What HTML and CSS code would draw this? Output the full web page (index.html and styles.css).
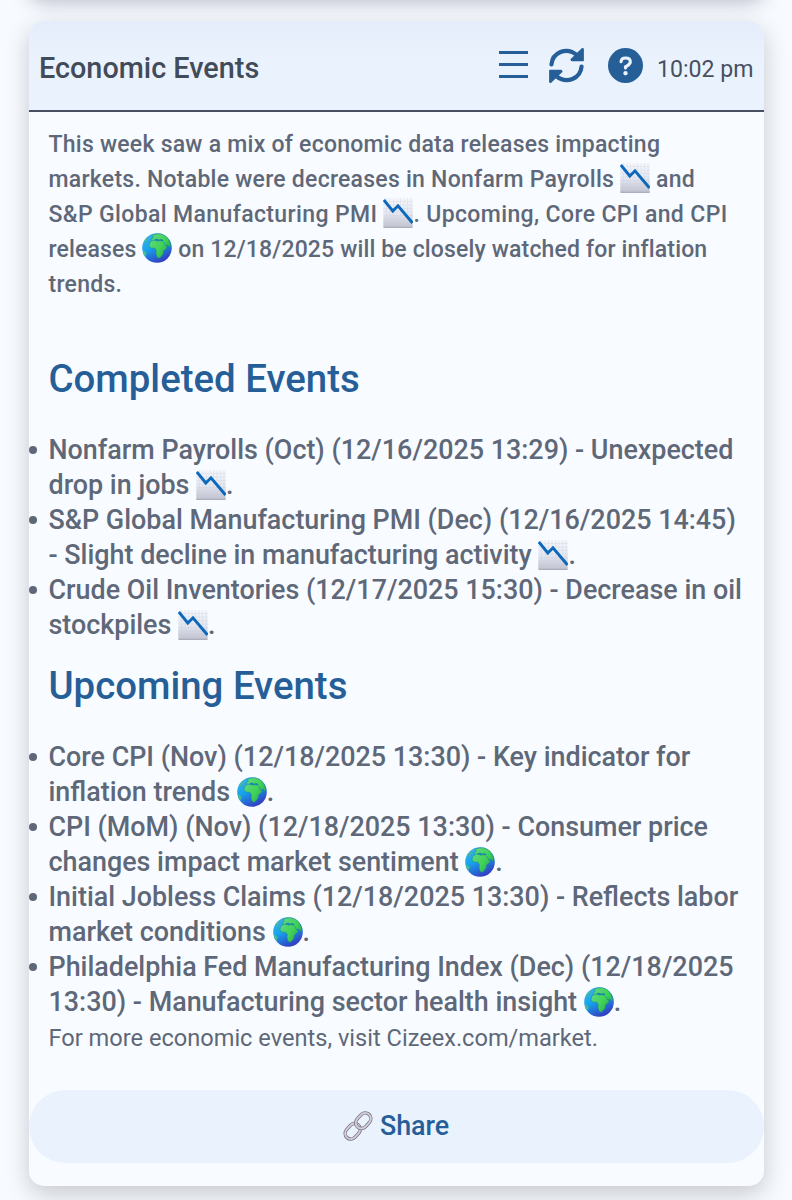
FILE: index.html
```html
<!DOCTYPE html>
<html lang="en">
<head>
    <meta charset="UTF-8">
    <meta name="viewport" content="width=device-width, initial-scale=1.0">
    <title>Economic Events</title>
    <link rel="stylesheet" href="styles.css">
</head>
<body>

<svg class="sprite" aria-hidden="true">
    <defs>
        <linearGradient id="paper" x1="0" y1="0" x2="0" y2="1">
            <stop offset="0" stop-color="#f5f7fc"/>
            <stop offset="0.5" stop-color="#e5e8f1"/>
            <stop offset="1" stop-color="#bfc1ce"/>
        </linearGradient>
        <linearGradient id="sea" x1="0" y1="0" x2="0.5" y2="1">
            <stop offset="0" stop-color="#46b3dc"/>
            <stop offset="0.5" stop-color="#16a5ed"/>
            <stop offset="1" stop-color="#3143c4"/>
        </linearGradient>
        <linearGradient id="land" x1="0" y1="0" x2="1" y2="0.7">
            <stop offset="0" stop-color="#65d78e"/>
            <stop offset="0.6" stop-color="#43d357"/>
            <stop offset="1" stop-color="#27a860"/>
        </linearGradient>
        <symbol id="chart" viewBox="0 0 30 30">
            <rect x="0.3" y="0.3" width="29.4" height="29.4" rx="1" fill="url(#paper)"/>
            <path d="M3.5 0v30M7 0v30M10.5 0v30M14 0v30M17.5 0v30M21 0v30M24.5 0v30M28 0v30M0 3.5h30M0 7h30M0 10.5h30M0 14h30M0 17.5h30M0 21h30M0 24.5h30" stroke="#c9cdda" stroke-width="0.3"/>
            <path d="M0.5 29.3h29" stroke="#a4a6b7"/>
            <path d="M0.8 2l9 11 5.2-5.2L29.5 25" fill="none" stroke="#0b68bd" stroke-width="2.9"/>
        </symbol>
        <symbol id="globe" viewBox="0 0 30 30">
            <circle cx="15" cy="15" r="14.8" fill="url(#sea)"/>
            <path d="M10 2.5L14 .9h5l4.500 2L27 7l1.800 5-1 2.500-1.800-2.500-1.600.5.6 2.500-3.500 3-.5 3.500-3.500 3.700-2.300-.7-1.200-4 .4-3-1.600-2.300-4-.2-1.800-2.500.8-3.500 2.700-1.500L9.500 6l1.800-1.500z" fill="url(#land)" stroke="#168a78" stroke-width="0.5"/>
            <path d="M11 8l2-2 2.500-.3 1.600 1 2-.6 2.500 1.200-.8 1.100-3-.5-2 .5-2.400-.8z" fill="#188ba5"/>
            <path d="M21.500 9l2.300 4" stroke="#188ba5" stroke-width="0.700"/>
            <path d="M2 8.500l2.400-3L7 4 5.200 7.500 2.800 9.500zM.8 17.500l2.400 1 1.500 2-1.500 3-1.500-1.500z" fill="#48bb92"/>
        </symbol>
        <symbol id="link" viewBox="0 0 30 30">
            <g fill="none">
                <rect x="-8.500" y="-5.700" width="17" height="11.400" rx="5.700" transform="translate(9.700 20.300) rotate(-48)" stroke="#777282" stroke-width="3.400"/>
                <rect x="-8.500" y="-5.700" width="17" height="11.400" rx="5.700" transform="translate(9.700 20.300) rotate(-48)" stroke="#d2cfd9" stroke-width="1.900"/>
                <rect x="-8.500" y="-5.700" width="17" height="11.400" rx="5.700" transform="translate(20.300 9.700) rotate(-48)" stroke="#777282" stroke-width="3.400"/>
                <rect x="-8.500" y="-5.700" width="17" height="11.400" rx="5.700" transform="translate(20.300 9.700) rotate(-48)" stroke="#d2cfd9" stroke-width="1.900"/>
            </g>
        </symbol>
    </defs>
</svg>

<div class="previous-card"></div>

<div class="card">
    <div class="card-header">
        <h1>Economic Events</h1>
        <div class="tools">
            <svg class="icon-menu" viewBox="0 0 30 30">
                <path d="M0 2.500h29M0 14.500h29M0 26.500h29" stroke="currentColor" stroke-width="2.800"/>
            </svg>
            <svg class="icon-refresh" viewBox="0 0 512 512">
                <path fill="none" stroke="currentColor" stroke-width="62" stroke-linecap="round" d="M36 240C50 76 249-35 415 108M476 272C462 436 263 547 97 404"/>
                <path fill="currentColor" stroke="currentColor" stroke-width="20" stroke-linejoin="round" d="M500 14v170H332l-8-17L486 10zM12 498V328h168l8 17L26 502z"/>
            </svg>
            <svg class="icon-help" viewBox="0 0 34 34">
                <circle cx="17" cy="17" r="17" fill="currentColor"/>
                <path d="M12.700 13.300c.1-2.700 1.700-3.600 4.300-3.600 2.800 0 4.700 1.300 4.700 3.700 0 2.700-2.200 3.200-4.700 4.900v1.200" fill="none" stroke="#eaf2fe" stroke-width="3" stroke-linecap="round"/>
                <circle cx="17" cy="24.500" r="2.100" fill="#eaf2fe"/>
            </svg>
            <span class="time">10:02 pm</span>
        </div>
    </div>

    <div class="card-body">
        <p class="summary">
            This week saw a mix of economic data releases impacting<br>
            markets. Notable were decreases in Nonfarm Payrolls <svg class="emoji"><use href="#chart"/></svg> and<br>
            <span class="wide">S&amp;P Global Manufacturing PMI <svg class="emoji"><use href="#chart"/></svg>. Upcoming, Core CPI and CPI</span><br>
            <span class="narrow">releases <svg class="emoji"><use href="#globe"/></svg> on 12/18/2025 will be closely watched for inflation</span><br>
            trends.
        </p>

        <h2>Completed Events</h2>
        <ul>
            <li>Nonfarm Payrolls (Oct) (12/16/2025 13:29) - Unexpected<br>drop in jobs <svg class="emoji"><use href="#chart"/></svg>.</li>
            <li>S&amp;P Global Manufacturing PMI (Dec) (12/16/2025 14:45)<br>- Slight decline in manufacturing activity <svg class="emoji"><use href="#chart"/></svg>.</li>
            <li>Crude Oil Inventories (12/17/2025 15:30) - Decrease in oil<br>stockpiles <svg class="emoji"><use href="#chart"/></svg>.</li>
        </ul>

        <h2>Upcoming Events</h2>
        <ul>
            <li>Core CPI (Nov) (12/18/2025 13:30) - Key indicator for<br>inflation trends <svg class="emoji"><use href="#globe"/></svg>.</li>
            <li>CPI (MoM) (Nov) (12/18/2025 13:30) - Consumer price<br>changes impact market sentiment <svg class="emoji"><use href="#globe"/></svg>.</li>
            <li>Initial Jobless Claims (12/18/2025 13:30) - Reflects labor<br>market conditions <svg class="emoji"><use href="#globe"/></svg>.</li>
            <li>Philadelphia Fed Manufacturing Index (Dec) (12/18/2025<br>13:30) - Manufacturing sector health insight <svg class="emoji"><use href="#globe"/></svg>.</li>
        </ul>
        <p class="more">For more economic events, visit Cizeex.com/market.</p>
    </div>

    <button class="share" type="button"><svg class="emoji"><use href="#link"/></svg> Share</button>
</div>

</body>
</html>
```

FILE: styles.css
```css
* {
    box-sizing: border-box;
}

body {
    font-family: Roboto, sans-serif;
    background-color: #f7faff;
    margin: 0;
    height: 1200px;
    overflow: hidden;
    color: #5e6878;
}

.sprite {
    display: block;
    width: 0;
    height: 0;
}

.previous-card,
.card {
    width: 734.5px;
    margin-left: 29px;
    border-radius: 15px;
    box-shadow: 0 8px 24px rgba(0, 0, 0, 0.2);
}

.previous-card {
    height: 60px;
    margin-top: -63px;
    margin-bottom: 24px;
    background-color: #f7faff;
    box-shadow: 0 4px 20px rgba(20, 20, 50, 0.3);
}

.card {
    height: 1165px;
    background-color: #f8fbff;
    overflow: hidden;
}

.card-header {
    display: flex;
    justify-content: space-between;
    height: 91px;
    padding: 0 10px;
    background: linear-gradient(#e6edfa, #eaf2fe 40px);
    border-bottom: 2px solid #465060;
    color: #414b59;
}

h1 {
    margin: 0;
    font-size: 28.8px;
    font-weight: 500;
    line-height: 94px;
}

.tools {
    display: flex;
    color: #265f98;
}

.icon-menu {
    width: 30px;
    height: 30px;
    margin: 29px 20px 0 0;
}

.icon-refresh {
    width: 35px;
    height: 35px;
    margin: 27px 24px 0 0;
}

.icon-help {
    width: 35px;
    height: 35px;
    margin: 27px 14px 0 0;
}

.time {
    color: #465060;
    font-size: 23.1px;
    line-height: 98px;
}

.card-body {
    height: 978px;
    padding: 15px 0 0 19.5px;
    white-space: nowrap;
}

p,
ul {
    margin: 0;
    padding: 0;
}

.summary {
    height: 212px;
    font-size: 23px;
    font-weight: 500;
    letter-spacing: 0.25px;
    line-height: 35px;
}

.summary .wide {
    letter-spacing: 0.37px;
}

.summary .narrow {
    letter-spacing: 0.15px;
}

.emoji {
    width: 30px;
    height: 30px;
    margin: -6px 0;
    vertical-align: 0;
}

h2 {
    height: 94px;
    margin: 0;
    padding-top: 15px;
    color: #265f98;
    font-size: 38.4px;
    font-weight: 500;
    line-height: 50px;
}

ul {
    height: 213px;
    font-size: 26.9px;
    font-weight: 500;
    line-height: 35px;
    list-style: none;
}

li::before {
    content: "";
    display: inline-block;
    width: 8px;
    height: 8px;
    margin: 0 12px 0 -20px;
    border-radius: 50%;
    background-color: #5e6878;
    vertical-align: 5px;
}

.more {
    margin-top: 67px;
    font-size: 23.6px;
    line-height: 36px;
}

.share {
    display: block;
    width: 100%;
    height: 73px;
    padding-bottom: 2px;
    border: none;
    border-radius: 37px;
    background-color: #eaf2fe;
    color: #265f98;
    font-family: inherit;
    font-size: 26.9px;
    font-weight: 500;
}
```
